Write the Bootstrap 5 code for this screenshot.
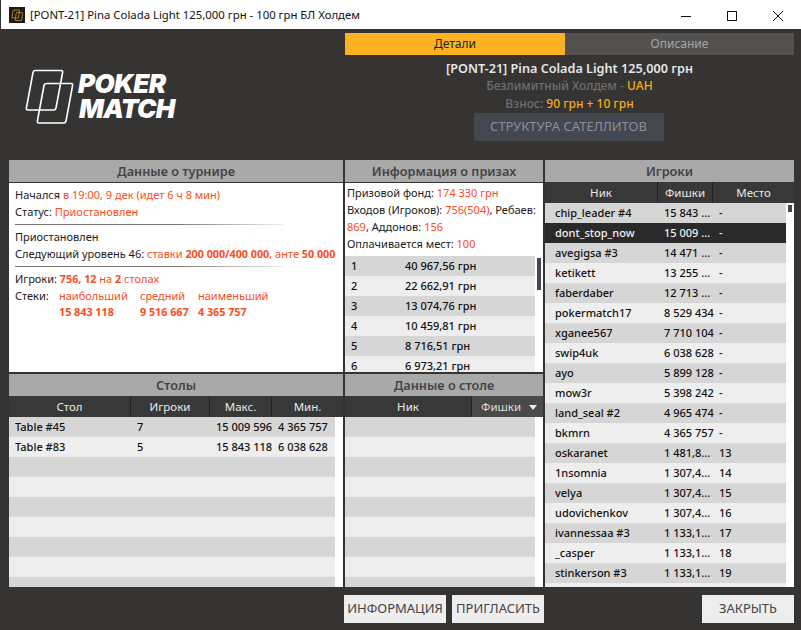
<!DOCTYPE html>
<html lang="ru">
<head>
  <meta charset="UTF-8" />
  <title>[PONT-21] Pina Colada Light</title>
  <link href="https://cdn.jsdelivr.net/npm/bootstrap@5.3.0/dist/css/bootstrap.min.css" rel="stylesheet">
  <style>
    html, body { height: 630px; overflow: hidden; }
    body { background: #353433; font-family: "Noto Sans", "Open Sans", sans-serif; font-size: 11px; color: #1a1a1a; }
    .win-title { height: 29px; background: #fff; border-left: 1px solid #353433; font-size: 11.35px; color: #111; }
    .win-icon { margin-left: 8px; margin-right: 5px; }
    .win-ctl { width: 46px; }
    .top-area { height: 131px; }
    .logo-box { width: 345px; padding: 40px 0 0 25px; }
    .logo-text { font-family: Inter, "Liberation Sans", sans-serif; font-weight: 900; font-style: italic; font-size: 26px; line-height: 25px; color: #fff; letter-spacing: -.6px; padding-top: 2px; margin-left: 3px; }
    .logo-text div:last-child { margin-left: 1px; letter-spacing: -.7px; }
    .info-box { width: 449px; padding-top: 4px; }
    .tab-on, .tab-off { height: 22px; line-height: 22px; font-size: 12px; text-align: center; }
    .tab-on { width: 220px; background: #fdb321; color: #222; }
    .tab-off { width: 229px; background: #535250; color: #a5a5a5; }
    .t-name { margin-top: 4px; font-size: 12.65px; font-weight: 600; line-height: 18px; color: #e6e6e6; }
    .t-sub { font-size: 12px; line-height: 18px; color: #6d6d6d; font-weight: 500; }
    .t-sub b { color: #f5ad12; font-weight: 500; }
    .btn-sat { width: 190px; height: 28px; padding: 0; margin-left: -2px; border: 0; border-radius: 0; background: #434750; color: #8b8e95; font-size: 13px; }
    .panes { display: grid; grid-template-columns: 334px 198px 249px; grid-template-rows: 212px 213px; gap: 2px; margin-left: 9px; height: 427px; }
    .pane { background: #fff; overflow: hidden; }
    .pane-players { grid-column: 3; grid-row: 1 / span 2; }
    .pane-head { height: 22px; line-height: 22px; flex: none; background: #a9a9a9; color: #444; font-size: 12.7px; font-weight: 600; text-align: center; }
    .pane-line { border-bottom: 1px solid #353433; height: 23px; }
    .info-text { padding: 3px 6px; line-height: 17px; font-size: 11px; }
    .info-prize { padding: 1px 2px 4px; }
    .info-text .hl { color: #ff4a1c; }
    .info-text b { font-weight: 700; font-size: 10.75px; line-height: 1; }
    .info-text .stack-grid b { line-height: 17px; }
    .rule { height: 1px; width: 268px; margin: 4px 0 3px; background: linear-gradient(to right, #777, #777 60%, #eee); }
    .stack-grid { display: grid; grid-template-columns: 44px 81px 58px auto; }
    .col-heads { height: 21px; flex: none; background: #383838; color: #e8e8e8; font-size: 11.5px; text-align: center; line-height: 21px; }
    .col-heads > div { border-right: 1px solid #222; }
    .col-heads > div:last-child { border-right: 0; }
    .col-sorted { background: #4a4a4a; color: #ddd; text-align: left; padding-left: 9px; }
    .sort-tri { display: inline-block; margin-left: 8px; vertical-align: middle; border: 4px solid transparent; border-top: 5px solid #eee; border-bottom: 0; }
    .rows-wrap { position: relative; flex: 1 1 auto; overflow: hidden; }
    .row-item { height: 20px; line-height: 20px; font-weight: 500; color: #111; white-space: nowrap; }
    .row-item:nth-child(odd) { background: #d6d6d6; }
    .row-item:nth-child(even) { background: #eee; }
    .row-item.row-sel { background: #2a2a2a; color: #f2f2f2; }
    .cell { flex: none; overflow: hidden; }
    .thumb { position: absolute; top: 2px; right: 2px; background: #434750; width: 4px; }
    .rows-tables { width: 326px; }
    .rows-tables .row-item, .rows-prize .row-item { padding-left: 6px; }
    .rows-prize { width: 190px; }
    .rows-players { width: 241px; }
    .rows-players .row-item { padding-left: 10px; }
    .foot-btn { height: 28px; padding: 0; border: 0; border-radius: 0; background: #eee; color: #444; font-size: 13px; }
    .foot-bar { padding-top: 8px; padding-right: 7px; }
    .foot-left { margin-left: 344px; }
    .w-info { width: 102px; }
    .w-inv { width: 92px; margin-left: 6px; }
    .w-close { width: 92px; margin-left: auto; }
  </style>
</head>
<body>
  <!-- title bar -->
  <div class="win-title d-flex align-items-center">
    <svg class="win-icon" width="16" height="16" viewBox="0 0 16 16">
      <rect width="16" height="16" fill="#1c1b18"/>
      <rect x="3" y="3" width="6.5" height="8" rx="1" fill="none" stroke="#a98227" transform="skewX(-8) translate(1.5 0)"/>
      <rect x="6" y="5.5" width="6.5" height="8" rx="1" fill="none" stroke="#a98227" transform="skewX(-8) translate(2 0)"/>
    </svg>
    <span class="flex-grow-1">[PONT-21] Pina Colada Light 125,000 грн - 100 грн БЛ Холдем</span>
    <div class="win-ctl text-center"><svg width="12" height="12" viewBox="0 0 12 12"><path d="M1 6.5h10" stroke="#111"/></svg></div>
    <div class="win-ctl text-center"><svg width="12" height="12" viewBox="0 0 12 12"><rect x="1.5" y="1.5" width="9" height="9" fill="none" stroke="#111"/></svg></div>
    <div class="win-ctl text-center"><svg width="12" height="12" viewBox="0 0 12 12"><path d="M1 1l10 10M11 1L1 11" stroke="#111" fill="none"/></svg></div>
  </div>

  <!-- logo and tournament heading -->
  <div class="top-area d-flex">
    <div class="logo-box d-flex">
      <svg width="50" height="56" viewBox="0 0 50 56">
        <path d="M10 1.5h26q2 0 1.6 2L31 39q-.4 2-2.4 2H3q-2 0-1.6-2L8 3.5q.4-2 2-2z" fill="none" stroke="#fff" stroke-width="1.6"/>
        <path d="M22 14.5h24q2 0 1.6 2L41 52q-.4 2-2.4 2H14q-2 0-1.6-2L19 16.5q.4-2 3-2z" fill="none" stroke="#fff" stroke-width="1.6"/>
      </svg>
      <div class="logo-text">
        <div>POKER</div>
        <div>MATCH</div>
      </div>
    </div>
    <div class="info-box text-center">
      <div class="d-flex">
        <div class="tab-on">Детали</div>
        <div class="tab-off">Описание</div>
      </div>
      <div class="t-name">[PONT-21] Pina Colada Light 125,000 грн</div>
      <div class="t-sub">Безлимитный Холдем - <b>UAH</b></div>
      <div class="t-sub">Взнос: <b>90 грн + 10 грн</b></div>
      <button class="btn btn-sat">СТРУКТУРА САТЕЛЛИТОВ</button>
    </div>
  </div>

  <div class="panes" id="panes">
    <!-- tournament -->
    <section class="pane d-flex flex-column">
      <div class="pane-head pane-line">Данные о турнире</div>
      <div class="info-text">
        <div>Начался <span class="hl">в 19:00, 9 дек (идет 6 ч 8 мин)</span></div>
        <div>Статус: <span class="hl">Приостановлен</span></div>
        <div class="rule"></div>
        <div>Приостановлен</div>
        <div class="text-nowrap">Следующий уровень 46: <span class="hl">ставки <b>200 000/400 000</b>, анте <b>50 000</b></span></div>
        <div class="rule"></div>
        <div>Игроки: <span class="hl"><b>756, 12</b> на <b>2</b> столах</span></div>
        <div class="stack-grid">
          <div>Стеки:</div><div class="hl">наибольший</div><div class="hl">средний</div><div class="hl">наименьший</div>
          <div></div><b class="hl">15 843 118</b><b class="hl">9 516 667</b><b class="hl">4 365 757</b>
        </div>
      </div>
    </section>

    <!-- prizes -->
    <section class="pane d-flex flex-column">
      <div class="pane-head pane-line">Информация о призах</div>
      <div class="info-text info-prize">
        <div>Призовой фонд: <span class="hl">174 330 грн</span></div>
        <div>Входов (Игроков): <span class="hl">756(504)</span>, Ребаев: <span class="hl">869</span>, Аддонов: <span class="hl">156</span></div>
        <div>Оплачивается мест: <span class="hl">100</span></div>
      </div>
      <div class="rows-wrap">
        <div class="rows-prize" id="prizeRows"></div>
        <div class="thumb" style="height:32px"></div>
      </div>
    </section>

    <!-- players -->
    <section class="pane pane-players d-flex flex-column">
      <div class="pane-head">Игроки</div>
      <div class="col-heads d-flex">
        <div style="width:113px">Ник</div>
        <div style="width:55px">Фишки</div>
        <div class="flex-grow-1">Место</div>
      </div>
      <div class="rows-wrap">
        <div class="rows-players" id="playerRows"></div>
        <div class="thumb" style="height:7px"></div>
      </div>
    </section>

    <!-- tables -->
    <section class="pane d-flex flex-column">
      <div class="pane-head">Столы</div>
      <div class="col-heads d-flex">
        <div style="width:122px">Стол</div>
        <div style="width:79px">Игроки</div>
        <div style="width:62px">Макс.</div>
        <div class="flex-grow-1">Мин.</div>
      </div>
      <div class="rows-wrap">
        <div class="rows-tables" id="tableRows"></div>
      </div>
    </section>

    <!-- table detail -->
    <section class="pane d-flex flex-column">
      <div class="pane-head">Данные о столе</div>
      <div class="col-heads d-flex">
        <div style="width:127px">Ник</div>
        <div class="col-sorted flex-grow-1">Фишки<span class="sort-tri"></span></div>
      </div>
      <div class="rows-wrap">
        <div class="rows-prize" id="seatRows"></div>
      </div>
    </section>
  </div>

  <div class="foot-bar d-flex">
    <button class="btn foot-btn foot-left w-info">ИНФОРМАЦИЯ</button>
    <button class="btn foot-btn w-inv">ПРИГЛАСИТЬ</button>
    <button class="btn foot-btn w-close">ЗАКРЫТЬ</button>
  </div>

  <script>
    const prizes = ['40 967,56 грн', '22 662,91 грн', '13 074,76 грн', '10 459,81 грн', '8 716,51 грн', '6 973,21 грн'];
    const players = [
      ['chip_leader #4', '15 843 ...', '-'], ['dont_stop_now', '15 009 ...', '-'], ['avegigsa #3', '14 471 ...', '-'],
      ['ketikett', '13 255 ...', '-'], ['faberdaber', '12 713 ...', '-'], ['pokermatch17', '8 529 434', '-'],
      ['xganee567', '7 710 104', '-'], ['swip4uk', '6 038 628', '-'], ['ayo', '5 899 128', '-'],
      ['mow3r', '5 398 242', '-'], ['land_seal #2', '4 965 474', '-'], ['bkmrn', '4 365 757', '-'],
      ['oskaranet', '1 481,8...', '13'], ['1nsomnia', '1 307,4...', '14'], ['velya', '1 307,4...', '15'],
      ['udovichenkov', '1 307,4...', '16'], ['ivannessaa #3', '1 133,1...', '17'], ['_casper', '1 133,1...', '18'],
      ['stinkerson #3', '1 133,1...', '19'], ['', '', '']
    ];
    const tables = [['Table #45', '7', '15 009 596', '4 365 757'], ['Table #83', '5', '15 843 118', '6 038 628']];

    function row(cells, widths, extra) {
      const cols = cells.map((c, i) => `<div class="cell" style="width:${widths[i]}px">${c}</div>`).join('');
      return `<div class="row-item d-flex ${extra || ''}">${cols}</div>`;
    }

    document.getElementById('prizeRows').innerHTML =
      prizes.map((p, i) => row([i + 1, p], [54, 120])).join('');
    document.getElementById('playerRows').innerHTML =
      players.map((p, i) => row(p, [109, 55, 40], i === 1 ? 'row-sel' : '')).join('');
    let html = '';
    for (let i = 0; i < 9; i++) {
      html += row(tables[i] || ['', '', '', ''], [122, 79, 62, 56]);
    }
    document.getElementById('tableRows').innerHTML = html;
    document.getElementById('seatRows').innerHTML = Array(9).fill(row([''], [184])).join('');
  </script>
</body>
</html>
